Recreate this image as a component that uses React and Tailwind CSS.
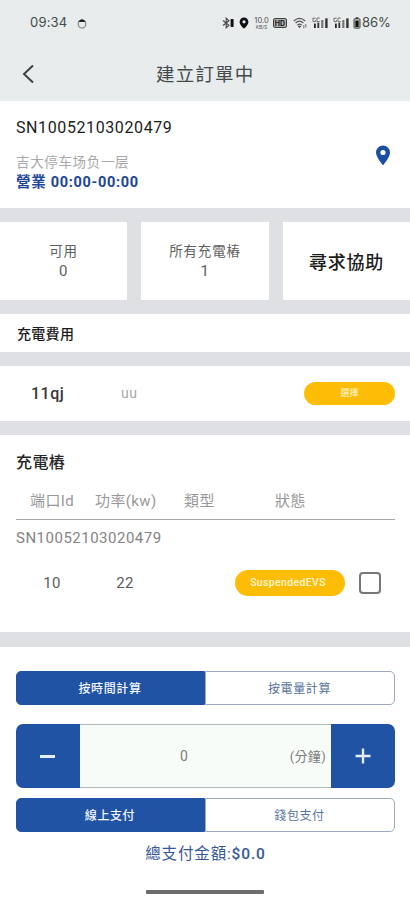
import React, { useState } from 'react';
import clsx from 'clsx';

const StatusBar = () => (
  <div className="flex h-[46px] items-center pl-[30px] pr-[20px] font-['Inter',sans-serif] text-[#444a4a]">
    <span className="w-[38px] text-[13px] tracking-[0.2px]">09:34</span>
    <svg className="ml-[9px]" width="10" height="11" viewBox="0 0 10 11">
      <ellipse cx="5" cy="6" rx="3.8" ry="4" fill="none" stroke="#777c7c" strokeWidth="1.1" />
      <path d="M1.2 3.8 Q5 -1.4 8.8 3.8 Q5 4.4 1.2 3.8Z" fill="#222" />
    </svg>
    <div className="ml-auto flex items-center">
      {/* bluetooth */}
      <svg width="13" height="12" viewBox="0 0 13 12">
        <path d="M1 3.5 7 8.2 4.2 10.8V1.2L7 3.8 1 8.5" fill="none" stroke="#444" strokeWidth="1.1" />
        <rect x="8.6" y="2" width="3" height="8" rx="0.8" fill="#111" />
      </svg>
      <svg className="ml-[4px]" width="10" height="12" viewBox="0 0 10 12">
        <path fillRule="evenodd" d="M5 0.5a4.4 4.4 0 0 0-4.4 4.4C0.6 8 5 11.6 5 11.6S9.4 8 9.4 4.9A4.4 4.4 0 0 0 5 0.5ZM5 3.2a1.6 1.6 0 1 1 0 3.2 1.6 1.6 0 0 1 0-3.2Z" fill="#111" />
      </svg>
      <div className="ml-[4px] flex w-[17px] flex-col items-center text-[#555]">
        <span className="text-[7.5px] leading-[7px]">10.0</span>
        <span className="mt-[1px] text-[5px] leading-[5px]">KB/S</span>
      </div>
      <div className="ml-[3px] flex h-[10px] w-[14px] items-center justify-center rounded-[2px] border-[1.5px] border-[#444] bg-[#aaa] text-[7px] font-bold leading-none text-[#222]">
        HD
      </div>
      <svg className="ml-[6px]" width="14" height="12" viewBox="0 0 14 12" fill="none" stroke="#555" strokeWidth="1.1">
        <path d="M0.8 4Q6.5-1.2 12.2 4M2.6 6Q6.5 2.4 10.4 6M4.4 8Q6.5 6.2 8.6 8" />
        <path d="M5.6 9.2h1.8L6.5 10.4Z" fill="#333" />
        <path d="M10.8 8v3.4M12.8 7v3.4" strokeWidth="0.8" />
      </svg>
      <Signal className="ml-[5px]" />
      <Signal className="ml-[4px]" />
      <svg className="ml-[3px]" width="8" height="12" viewBox="0 0 8 12">
        <rect x="1" y="1.6" width="6" height="9.6" rx="1.2" fill="#bbb" stroke="#444" />
        <rect x="2.6" y="0.2" width="2.8" height="1.6" fill="#444" />
        <rect x="2.4" y="3.6" width="3.2" height="6.4" fill="#111" />
      </svg>
      <span className="ml-[1px] w-[28px] whitespace-nowrap text-[13px] tracking-[-0.1px]">86%</span>
    </div>
  </div>
);

const Signal = ({ className }) => (
  <svg className={className} width="17" height="12" viewBox="0 0 17 12">
    <path d="M1 1.2h2.6M1 1v3.6h2.6V3M5 1v3.6h2.8M5 1h2.8" stroke="#666" strokeWidth="0.9" fill="none" />
    <rect x="2" y="6.6" width="1.8" height="4.4" fill="#222" />
    <rect x="5.4" y="5.6" width="1.8" height="5.4" fill="#333" />
    <rect x="9.2" y="3" width="2.2" height="8" fill="#777" />
    <rect x="13.2" y="1.4" width="2.4" height="9.6" fill="#333" />
  </svg>
);

const Segmented = ({ options }) => {
  const [active, setActive] = useState(0);

  return (
    <div className="grid h-[34px] grid-cols-[189px_190px]">
      {options.map((label, i) => (
        <button
          key={label}
          onClick={() => setActive(i)}
          className={clsx(
            'border pr-[1px] pt-[1px] text-[12px] tracking-[0.6px] first:rounded-l-[5px] last:rounded-r-[5px]',
            active === i
              ? 'border-[#2153a5] bg-[#2153a5] font-medium text-[#f2f6ff]'
              : 'border-[#9dabc5] bg-white text-[#56739b]'
          )}
        >
          {label}
        </button>
      ))}
    </div>
  );
};

const App = () => {
  const [amount, setAmount] = useState(0);
  const [checked, setChecked] = useState(false);

  return (
    <div className="flex h-[900px] w-[410px] flex-col overflow-hidden bg-[#dfe0e4] font-['Roboto','Noto_Sans_CJK_TC',sans-serif]">
      {/* Header */}
      <header className="h-[101px] bg-[#e8ecec]">
        <StatusBar />
        <div className="flex h-[55px] items-center">
          <svg className="ml-[21px]" width="14" height="20" viewBox="0 0 14 20">
            <path d="M12 1.5 3 10l9 8.5" fill="none" stroke="#3e4343" strokeWidth="2" />
          </svg>
          <h1 className="ml-[121px] pt-[3px] text-[18.5px] leading-none tracking-[1.2px] text-[#444949]">建立訂單中</h1>
        </div>
      </header>

      {/* Station */}
      <section className="flex h-[107px] justify-between bg-white pl-[16px] pr-[19px]">
        <div>
          <p className="mt-[16px] text-[16px] leading-[22px] tracking-[0.6px] text-[#1c1c1c]">SN10052103020479</p>
          <p className="mt-[12px] font-['Noto_Sans_CJK_SC',sans-serif] text-[13.5px] leading-[20px] tracking-[0.65px] text-[#a8a8a8]">吉大停车场负一层</p>
          <p className="pt-[1px] text-[14.5px] font-bold leading-[22px] tracking-[0.7px] text-[#1c469a]">營業 00:00-00:00</p>
        </div>
        <svg className="mt-[44px]" width="16" height="21" viewBox="0 0 16 21">
          <path fillRule="evenodd" d="M8 0.5A7 7 0 0 0 1 7.5C1 12.5 8 20.3 8 20.3S15 12.5 15 7.5A7 7 0 0 0 8 0.5ZM8 4.9a2.6 2.6 0 1 1 0 5.2 2.6 2.6 0 0 1 0-5.2Z" fill="#1b4fa3" />
        </svg>
      </section>

      {/* Summary cards */}
      <section className="mt-[14px] grid h-[78px] grid-cols-[127px_128px_127px] gap-[14px] text-center text-[13.5px] leading-[20px] tracking-[0.8px] text-[#606060]">
        <div className="bg-white pt-[19px]">
          <p>可用</p>
          <p className="text-[15px]">0</p>
        </div>
        <div className="bg-white pt-[19px]">
          <p>所有充電樁</p>
          <p className="text-[15px]">1</p>
        </div>
        <button className="bg-white pt-[3px] text-[18px] font-medium tracking-[0.8px] text-[#1c1c1c]">尋求協助</button>
      </section>

      {/* Fees */}
      <section className="mt-[14px] flex h-[38px] items-center bg-white pl-[17px] pt-[2px] text-[14px] font-medium tracking-[0.3px] text-[#1c1c1c]">
        充電費用
      </section>
      <section className="mt-[14px] flex h-[55px] items-center bg-white pr-[15px]">
        <span className="ml-[31px] w-[90px] text-[16px] font-medium tracking-[0.5px] text-[#383838]">11qj</span>
        <span className="text-[14px] tracking-[0.5px] text-[#aaa]">uu</span>
        <button className="ml-auto h-[23px] w-[91px] rounded-full bg-[#febd05] pt-[1px] text-[9px] font-medium text-[#fff3c4]">選擇</button>
      </section>

      {/* Chargers */}
      <section className="mt-[14px] h-[197px] bg-white pl-[16px] pr-[15px] pt-[17px]">
        <h2 className="text-[16px] font-medium leading-[22px] tracking-[0.4px] text-[#262626]">充電樁</h2>
        <div className="mt-[11px] flex h-[35px] border-b border-[#a6a6a6] text-[15px] leading-[32px] tracking-[0.4px] text-[#989898]">
          <span className="ml-[14px] w-[65px]">端口Id</span>
          <span className="w-[89px]">功率(kw)</span>
          <span className="w-[91px]">類型</span>
          <span>狀態</span>
        </div>
        <p className="mt-[8px] text-[15px] leading-[20px] tracking-[0.5px] text-[#848484]">SN10052103020479</p>
        <div className="mt-[21px] flex h-[28px] items-center text-[15px] tracking-[0.3px] text-[#5c5c5c]">
          <span className="w-[72px] text-center">10</span>
          <span className="w-[74px] text-center">22</span>
          <span className="ml-auto flex h-[26px] w-[110px] items-center justify-center rounded-full bg-[#febd05] pr-[4px] text-[10.5px] font-medium tracking-[0.35px] text-[#fff6d6]">
            SuspendedEVS
          </span>
          <button
            onClick={() => setChecked(!checked)}
            className={clsx(
              'ml-[14px] mr-[14px] h-[22px] w-[22px] rounded-[4px] border-2 border-[#777]',
              checked ? 'bg-[#2153a5]' : 'bg-white'
            )}
          />
        </div>
      </section>

      {/* Payment */}
      <section className="mt-[15px] flex-1 bg-white pl-[16px] pr-[15px] pt-[24px]">
        <Segmented options={['按時間計算', '按電量計算']} />
        <div className="mt-[19px] flex h-[64px] overflow-hidden rounded-[7px]">
          <button
            onClick={() => setAmount(Math.max(0, amount - 1))}
            className="flex w-[64px] items-center justify-center bg-[#2153a5] pr-[1px]"
          >
            <span className="h-[3px] w-[15px] bg-[#e6edfa]" />
          </button>
          <div className="grid flex-1 grid-cols-[1fr_42px_1fr] items-center border-y border-[#b4b8b4] bg-[#f7fcf9] pr-[5px] text-[14px] text-[#7c7c7c]">
            <span className="col-start-2 -ml-[38px] text-center">{amount}</span>
            <span className="whitespace-nowrap pt-[1px] text-right text-[13px] tracking-[0.3px]">(分鐘)</span>
          </div>
          <button
            onClick={() => setAmount(amount + 1)}
            className="flex w-[64px] items-center justify-center bg-[#2153a5]"
          >
            <svg width="16" height="16" viewBox="0 0 16 16">
              <path d="M8 0.5v15M0.5 8h15" stroke="#e6edfa" strokeWidth="2.4" />
            </svg>
          </button>
        </div>
        <div className="mt-[10px]">
          <Segmented options={['線上支付', '錢包支付']} />
        </div>
        <p className="mt-[10px] text-center text-[15.5px] leading-[24px] tracking-[0.85px] text-[#35599a]">
          總支付金額:<span className="font-medium">$0.0</span>
        </p>
        <div className="ml-[130px] mt-[24px] h-[4px] w-[118px] rounded-[1px] bg-[#6c6c6c]" />
      </section>
    </div>
  );
};

export default App;
